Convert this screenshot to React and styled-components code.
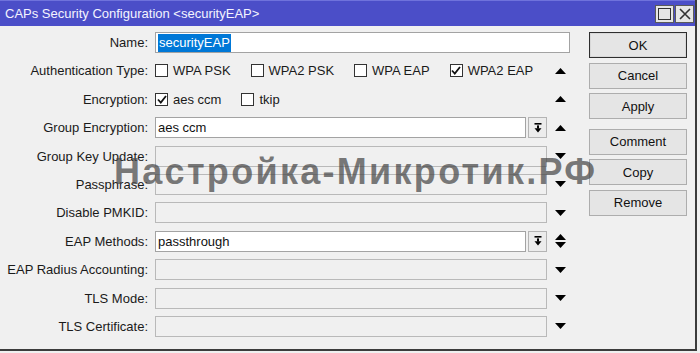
import React from 'react';
import styled, { createGlobalStyle } from 'styled-components';

const GlobalStyle = createGlobalStyle`
  html, body {
    margin: 0;
    padding: 0;
    background: #f0f0f0;
  }
  body {
    font-family: "Liberation Sans", Arial, sans-serif;
    font-size: 13px;
    color: #1a1a1a;
  }
`;

const Window = styled.div`
  position: relative;
  width: 695px;
  height: 349px;
  background: #f0f0f0;
  border-right: 2px solid #3c3c3c;
  border-bottom: 2px solid #3c3c3c;
  overflow: hidden;
`;

const TitleBar = styled.div`
  height: 26px;
  background: #4b4ec8;
  border-top: 1px solid #6f72dc;
  box-sizing: border-box;
  display: flex;
  align-items: center;
  justify-content: space-between;
  padding: 0 1px 0 5px;
  color: #f4f4ff;
  font-size: 13px;
`;

const TitleButtons = styled.div`
  display: flex;
  gap: 1px;
`;

const TitleButton = styled.div`
  width: 17px;
  height: 16px;
  background: #e6e6e6;
  border: 1px solid #5a5a5a;
  display: flex;
  align-items: center;
  justify-content: center;
`;

const Body = styled.div`
  display: flex;
  align-items: flex-start;
  padding-top: 6px;
`;

const Form = styled.div`
  display: grid;
  grid-template-columns: 155px 392px 23px;
  grid-auto-rows: 21px;
  row-gap: 7.4px;
`;

const Label = styled.div`
  padding-right: 7px;
  display: flex;
  align-items: center;
  justify-content: flex-end;
  white-space: nowrap;
`;

const FieldCell = styled.div`
  grid-column: ${p => (p.$wide ? 'span 2' : 'span 1')};
  display: flex;
  align-items: center;
  gap: 2px;
  min-width: 0;
`;

const Input = styled.div`
  flex: 1;
  height: 21px;
  box-sizing: border-box;
  border: 1px solid ${p => (p.$disabled ? '#b9b9b9' : '#a3a3a3')};
  background: ${p => (p.$disabled ? '#f0f0f0' : '#ffffff')};
  display: flex;
  align-items: center;
  padding-left: 2px;
  color: #111;
`;

const Selected = styled.span`
  background: #0078d7;
  color: #ffffff;
  padding: 1px 1px 2px;
  line-height: 15px;
`;

const DropButton = styled.div`
  width: 19px;
  height: 21px;
  box-sizing: border-box;
  border: 1px solid #b4b4b4;
  background: #ececec;
  display: flex;
  align-items: center;
  justify-content: center;
`;

const Checks = styled.div`
  display: flex;
  align-items: center;
  gap: 20px;
`;

const CheckItem = styled.div`
  display: flex;
  align-items: center;
  gap: 5px;
  white-space: nowrap;
`;

const Box = styled.div`
  width: 13px;
  height: 13px;
  box-sizing: border-box;
  border: 1px solid #333;
  background: #fff;
  display: flex;
  align-items: center;
  justify-content: center;
`;

const ArrowCell = styled.div`
  display: flex;
  align-items: center;
  padding-left: 8px;
`;

const Buttons = styled.div`
  margin-left: 19px;
  display: flex;
  flex-direction: column;
  gap: 4.6px;
`;

const Button = styled.div`
  width: 98px;
  height: 26px;
  box-sizing: border-box;
  border: 1px solid ${p => (p.$default ? '#2e2e2e' : '#adadad')};
  box-shadow: ${p => (p.$default ? 'inset 0 0 0 1px #d8d8d8' : 'none')};
  background: #e5e5e5;
  display: flex;
  align-items: center;
  justify-content: center;
  margin-top: ${p => (p.$spaced ? '5px' : '0')};
  color: #111;
`;

const Watermark = styled.div`
  position: absolute;
  left: 114px;
  top: 151px;
  font-family: "Liberation Sans", Arial, sans-serif;
  font-weight: bold;
  font-size: 36px;
  letter-spacing: 2.3px;
  color: rgba(72, 72, 72, 0.72);
  white-space: nowrap;
  pointer-events: none;
`;

const Tick = () => (
  <svg width="10" height="9" viewBox="0 0 10 9">
    <polyline points="1,4.5 3.8,7.5 9,1" fill="none" stroke="#111" strokeWidth="1.8" />
  </svg>
);

const Check = ({ on, label }) => (
  <CheckItem>
    <Box>{on && <Tick />}</Box>
    {label}
  </CheckItem>
);

const Up = () => (
  <svg width="11" height="6" viewBox="0 0 11 6">
    <polygon points="0,6 11,6 5.5,0" fill="#000" />
  </svg>
);

const Down = () => (
  <svg width="11" height="6" viewBox="0 0 11 6">
    <polygon points="0,0 11,0 5.5,6" fill="#000" />
  </svg>
);

const UpDown = () => (
  <svg width="11" height="14" viewBox="0 0 11 14">
    <polygon points="0,6 11,6 5.5,0" fill="#000" />
    <polygon points="0,8 11,8 5.5,14" fill="#000" />
  </svg>
);

const DropIcon = () => (
  <svg width="8" height="10" viewBox="0 0 8 10">
    <rect x="0.5" y="0" width="7" height="1.6" fill="#000" />
    <rect x="3" y="2.4" width="2" height="3.2" fill="#000" />
    <polygon points="0.5,5.2 7.5,5.2 4,9.4" fill="#000" />
  </svg>
);

const arrows = { up: <Up />, down: <Down />, both: <UpDown /> };

const Field = ({ value, disabled, drop }) => (
  <FieldCell>
    <Input $disabled={disabled}>{value}</Input>
    {drop && (
      <DropButton>
        <DropIcon />
      </DropButton>
    )}
  </FieldCell>
);

const rows = [
  { label: 'Group Encryption', value: 'aes ccm', drop: true, arrow: 'up' },
  { label: 'Group Key Update', disabled: true, arrow: 'down' },
  { label: 'Passphrase', disabled: true, arrow: 'down' },
  { label: 'Disable PMKID', disabled: true, arrow: 'down' },
  { label: 'EAP Methods', value: 'passthrough', drop: true, arrow: 'both' },
  { label: 'EAP Radius Accounting', disabled: true, arrow: 'down' },
  { label: 'TLS Mode', disabled: true, arrow: 'down' },
  { label: 'TLS Certificate', disabled: true, arrow: 'down' },
];

export default function App() {
  return (
    <>
      <GlobalStyle />
      <Window>
        <TitleBar>
          <span>CAPs Security Configuration &lt;securityEAP&gt;</span>
          <TitleButtons>
            <TitleButton>
              <svg width="13" height="12" viewBox="0 0 13 12">
                <rect x="0.5" y="0.5" width="12" height="11" fill="none" stroke="#333" />
              </svg>
            </TitleButton>
            <TitleButton>
              <svg width="12" height="12" viewBox="0 0 12 12">
                <path d="M1,1 L11,11 M11,1 L1,11" stroke="#333" strokeWidth="1.6" />
              </svg>
            </TitleButton>
          </TitleButtons>
        </TitleBar>
        <Body>
          <Form>
            <Label>Name:</Label>
            <FieldCell $wide>
              <Input>
                <Selected>securityEAP</Selected>
              </Input>
            </FieldCell>

            <Label>Authentication Type:</Label>
            <FieldCell>
              <Checks>
                <Check label="WPA PSK" />
                <Check label="WPA2 PSK" />
                <Check label="WPA EAP" />
                <Check on label="WPA2 EAP" />
              </Checks>
            </FieldCell>
            <ArrowCell>
              <Up />
            </ArrowCell>

            <Label>Encryption:</Label>
            <FieldCell>
              <Checks>
                <Check on label="aes ccm" />
                <Check label="tkip" />
              </Checks>
            </FieldCell>
            <ArrowCell>
              <Up />
            </ArrowCell>

            {rows.map(r => (
              <React.Fragment key={r.label}>
                <Label>{r.label}:</Label>
                <Field value={r.value} disabled={r.disabled} drop={r.drop} />
                <ArrowCell>{arrows[r.arrow]}</ArrowCell>
              </React.Fragment>
            ))}
          </Form>
          <Buttons>
            <Button $default>OK</Button>
            <Button>Cancel</Button>
            <Button>Apply</Button>
            <Button $spaced>Comment</Button>
            <Button>Copy</Button>
            <Button>Remove</Button>
          </Buttons>
        </Body>
        <Watermark>Настройка-Микротик.РФ</Watermark>
      </Window>
    </>
  );
}
